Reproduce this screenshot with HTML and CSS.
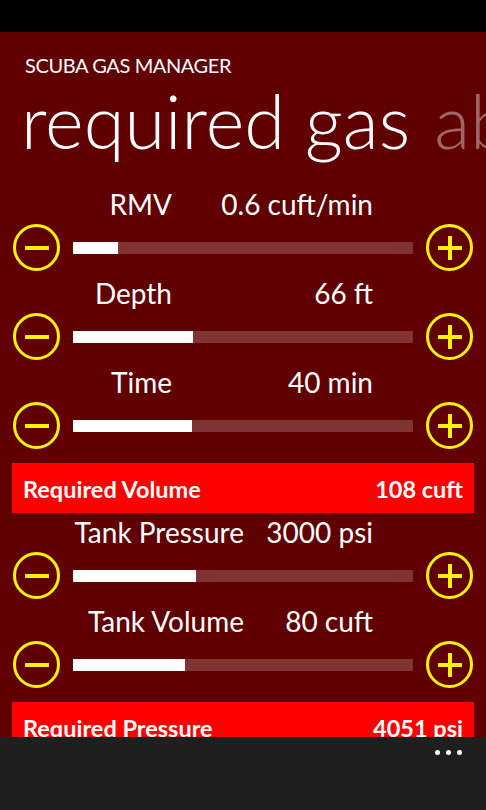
FILE: index.html
```html
<!doctype html>
<html>
  <head>
    <title>Scuba Gas Manager</title>
    <link rel="stylesheet" href="styles.css">
  </head>
  <body>

    <div class="status-bar"></div>

    <div class="header">
      <p class="app-title">SCUBA GAS MANAGER</p>
      <div class="pivot-headers">
        <span class="pivot-item active">required gas</span>
        <span class="pivot-item">about</span>
      </div>
    </div>

    <div class="slider-row">
      <div class="readout"><span class="label">RMV</span><span class="value">0.6 cuft/min</span></div>
      <div class="control">
        <button class="round-btn minus"></button>
        <div class="track"><div class="fill" style="width:13.2%"></div></div>
        <button class="round-btn plus"></button>
      </div>
    </div>

    <div class="slider-row">
      <div class="readout"><span class="label">Depth</span><span class="value">66 ft</span></div>
      <div class="control">
        <button class="round-btn minus"></button>
        <div class="track"><div class="fill" style="width:35.3%"></div></div>
        <button class="round-btn plus"></button>
      </div>
    </div>

    <div class="slider-row">
      <div class="readout"><span class="label">Time</span><span class="value">40 min</span></div>
      <div class="control">
        <button class="round-btn minus"></button>
        <div class="track"><div class="fill" style="width:35%"></div></div>
        <button class="round-btn plus"></button>
      </div>
    </div>

    <div class="summary"><span>Required Volume</span><span>108 cuft</span></div>

    <div class="slider-row">
      <div class="readout wide"><span class="label">Tank Pressure</span><span class="value">3000 psi</span></div>
      <div class="control">
        <button class="round-btn minus"></button>
        <div class="track"><div class="fill" style="width:36.2%"></div></div>
        <button class="round-btn plus"></button>
      </div>
    </div>

    <div class="slider-row">
      <div class="readout wide"><span class="label">Tank Volume</span><span class="value">80 cuft</span></div>
      <div class="control">
        <button class="round-btn minus"></button>
        <div class="track"><div class="fill" style="width:33%"></div></div>
        <button class="round-btn plus"></button>
      </div>
    </div>

    <div class="summary"><span>Required Pressure</span><span>4051 psi</span></div>

    <div class="app-bar">
      <div class="dots"><i></i><i></i><i></i></div>
    </div>

  </body>
</html>
```

FILE: styles.css
```css
* { margin: 0; padding: 0; box-sizing: border-box; }
html, body { height: 100%; }
body { background: #600000; color: #fff; font-family: Lato, "Open Sans", sans-serif; overflow: hidden; position: relative; }

.status-bar { height: 32px; background: #000; }

.header { height: 150px; padding-top: 20px; overflow: hidden; }
.app-title { font-size: 20px; letter-spacing: -0.4px; line-height: 26px; padding-left: 25px; }
.pivot-headers { white-space: nowrap; font-size: 74px; font-weight: 300; line-height: 86px; padding-left: 21px; }
.pivot-item { margin-right: 4px; color: rgba(255,255,255,0.4); }
.pivot-item.active { color: #fff; }

.slider-row { height: 89px; }
.readout { display: flex; height: 42px; padding-top: 1px; font-size: 28px; line-height: 42px; }
.readout .label { width: 172px; text-align: right; }
.readout .value { width: 201px; text-align: right; }
.readout.wide .label { width: 244px; }
.readout.wide .value { width: 129px; }

.control { display: flex; align-items: center; gap: 13px; height: 47px; padding: 0 13px; }
.track { flex: 1; height: 12px; background: rgba(255,255,255,0.2); }
.fill { height: 100%; background: #fff; }

.round-btn { width: 47px; height: 47px; border: 3px solid #fff200; border-radius: 50%; background: none; position: relative; }
.round-btn::before, .round-btn::after { content: ""; position: absolute; left: 50%; top: 50%; background: #fff200; }
.round-btn::before { width: 24px; height: 4px; margin: -2px 0 0 -12px; }
.round-btn.plus::after { width: 4px; height: 24px; margin: -12px 0 0 -2px; }

.summary { display: flex; justify-content: space-between; align-items: center; height: 50px; margin: 14px 12px -3px; padding: 2px 11px 0; background: #ff0000; font-size: 23.5px; font-weight: 700; }

.app-bar { position: absolute; left: 0; right: 0; bottom: 0; height: 73px; background: #1f1f1f; }
.dots { display: flex; gap: 6px; position: absolute; right: 24px; top: 13px; }
.dots i { width: 5px; height: 5px; border-radius: 50%; background: #fff; }
```
